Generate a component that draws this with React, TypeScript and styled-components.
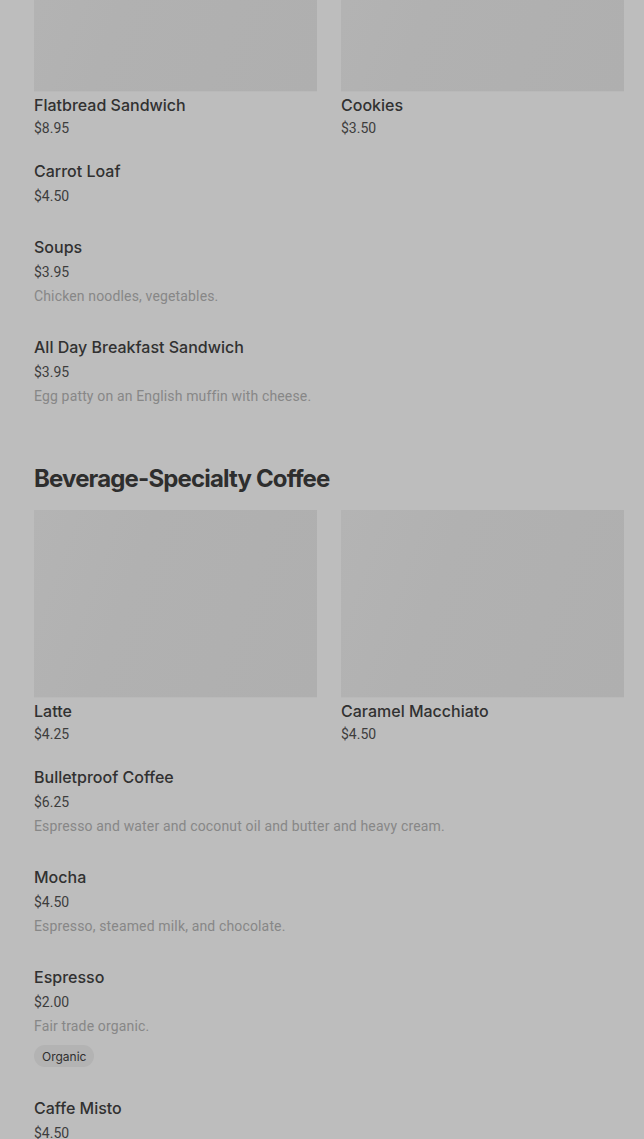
import React from 'react';
import styled, { createGlobalStyle } from 'styled-components';

type Item = {
  name: string;
  price: string;
  description?: string;
  tags?: string[];
};

type Section = {
  title?: string;
  featured: Item[];
  items: Item[];
};

const sections: Section[] = [
  {
    featured: [
      { name: 'Flatbread Sandwich', price: '$8.95' },
      { name: 'Cookies', price: '$3.50' },
    ],
    items: [
      { name: 'Carrot Loaf', price: '$4.50' },
      { name: 'Soups', price: '$3.95', description: 'Chicken noodles, vegetables.' },
      {
        name: 'All Day Breakfast Sandwich',
        price: '$3.95',
        description: 'Egg patty on an English muffin with cheese.',
      },
    ],
  },
  {
    title: 'Beverage-Specialty Coffee',
    featured: [
      { name: 'Latte', price: '$4.25' },
      { name: 'Caramel Macchiato', price: '$4.50' },
    ],
    items: [
      {
        name: 'Bulletproof Coffee',
        price: '$6.25',
        description: 'Espresso and water and coconut oil and butter and heavy cream.',
      },
      { name: 'Mocha', price: '$4.50', description: 'Espresso, steamed milk, and chocolate.' },
      { name: 'Espresso', price: '$2.00', description: 'Fair trade organic.', tags: ['Organic'] },
      { name: 'Caffe Misto', price: '$4.50' },
    ],
  },
];

const GlobalStyle = createGlobalStyle`
  html, body {
    margin: 0;
    padding: 0;
    background: #bdbdbd;
    font-family: Roboto, "Liberation Sans", sans-serif;
    overflow: hidden;
  }
`;

// the menu is shown scrolled, the first row of pictures sits partly above the view
const Page = styled.main`
  margin-top: -96px;
  padding: 0 20px 0 34px;
`;

const SectionBlock = styled.section`
  & + & {
    margin-top: 42px;
  }
`;

const SectionTitle = styled.h2`
  margin: 0 0 15px;
  font-family: Inter, Roboto, sans-serif;
  font-size: 24px;
  line-height: 32px;
  font-weight: 700;
  letter-spacing: -0.85px;
  color: #2e2e2e;
`;

const FeaturedGrid = styled.div`
  display: grid;
  grid-template-columns: 1fr 1fr;
  column-gap: 24px;
  margin-bottom: 7px;
`;

const Card = styled.div`
  display: flex;
  flex-direction: column;
`;

const Picture = styled.div`
  height: 187px;
  background: linear-gradient(110deg, #b4b4b4 0%, #b1b1b1 35%, #afafaf 100%);
  box-shadow: 0 1px 0 #b9b9b9;
`;

const ItemName = styled.div<{ $tight?: boolean }>`
  margin-top: ${({ $tight }) => ($tight ? '2px' : '0')};
  font-family: Inter, Roboto, sans-serif;
  font-size: 16px;
  line-height: 24px;
  font-weight: 500;
  color: #313131;
`;

const Price = styled.div<{ $tight?: boolean }>`
  margin-top: ${({ $tight }) => ($tight ? '1px' : '3px')};
  font-size: 14px;
  line-height: 20px;
  color: #3d3d3d;
`;

const Description = styled.div`
  margin-top: 4px;
  font-size: 14px;
  line-height: 20px;
  letter-spacing: 0.15px;
  color: #878787;
`;

const List = styled.div`
  display: flex;
  flex-direction: column;
`;

const Row = styled.div`
  padding: 14px 0 15px;
`;

const Tags = styled.div`
  display: flex;
  gap: 6px;
  margin-top: 9px;
`;

const Tag = styled.span`
  display: inline-flex;
  align-items: center;
  height: 22px;
  padding: 0 8px;
  border-radius: 11px;
  background: #b3b3b3;
  font-family: Inter, Roboto, sans-serif;
  font-size: 12px;
  color: #2f2f2f;
`;

const App: React.FC = () => {
  return (
    <>
      <GlobalStyle />
      <Page>
        {sections.map((section, i) => (
          <SectionBlock key={i}>
            {section.title && <SectionTitle>{section.title}</SectionTitle>}
            <FeaturedGrid>
              {section.featured.map((item) => (
                <Card key={item.name}>
                  <Picture />
                  <ItemName $tight>{item.name}</ItemName>
                  <Price $tight>{item.price}</Price>
                </Card>
              ))}
            </FeaturedGrid>
            <List>
              {section.items.map((item) => (
                <Row key={item.name}>
                  <ItemName>{item.name}</ItemName>
                  <Price>{item.price}</Price>
                  {item.description && <Description>{item.description}</Description>}
                  {item.tags && (
                    <Tags>
                      {item.tags.map((tag) => (
                        <Tag key={tag}>{tag}</Tag>
                      ))}
                    </Tags>
                  )}
                </Row>
              ))}
            </List>
          </SectionBlock>
        ))}
      </Page>
    </>
  );
};

export default App;
